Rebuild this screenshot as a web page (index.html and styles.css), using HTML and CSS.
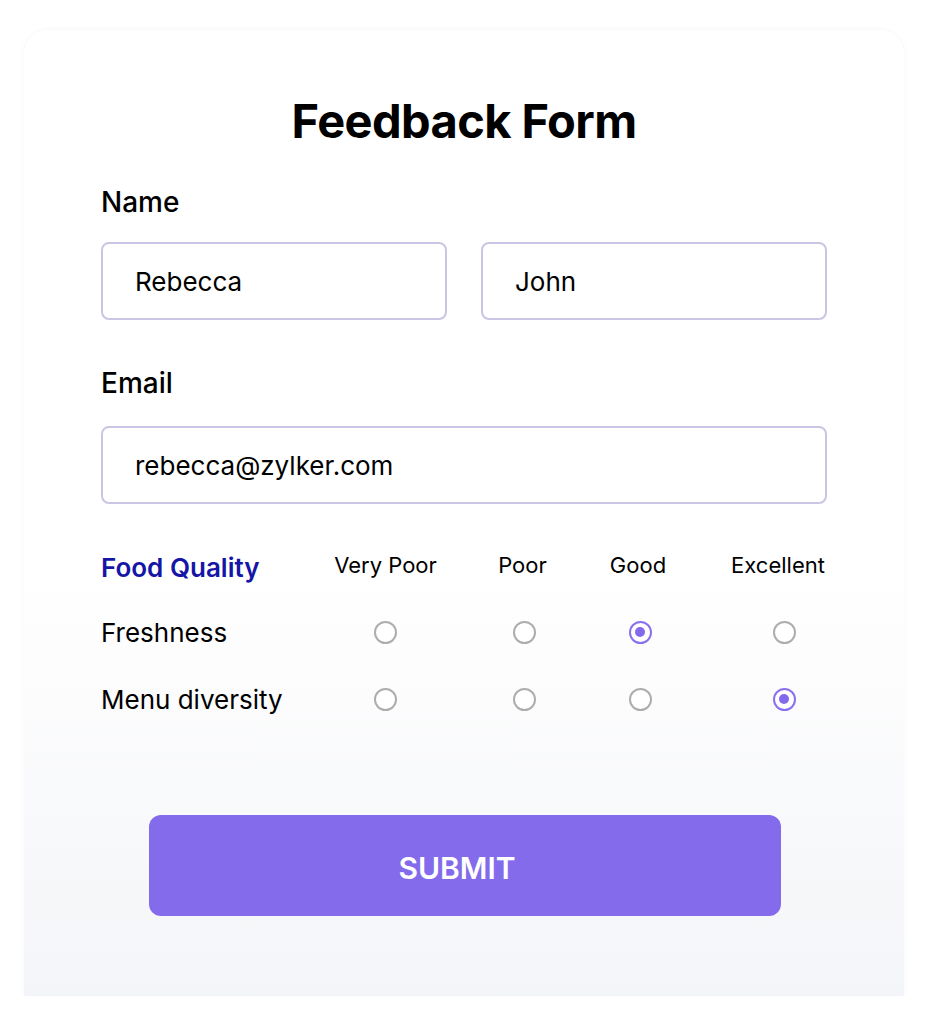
FILE: index.html
```html
<!DOCTYPE html>
<html lang="en">
<head>
    <meta charset="UTF-8">
    <meta name="viewport" content="width=device-width, initial-scale=1.0">
    <title>Feedback Form</title>
    <link rel="stylesheet" href="styles.css">
</head>
<body>
    <form class="card">
        <h1 class="title">Feedback Form</h1>

        <label class="field-label">Name</label>
        <div class="name-row">
            <input class="text-input" type="text" value="Rebecca">
            <input class="text-input" type="text" value="John">
        </div>

        <label class="field-label email-label">Email</label>
        <input class="text-input" type="text" value="rebecca@zylker.com">

        <div class="rating">
            <div class="rating-title">Food Quality</div>
            <div class="rating-head">Very Poor</div>
            <div class="rating-head">Poor</div>
            <div class="rating-head">Good</div>
            <div class="rating-head">Excellent</div>

            <div class="rating-label">Freshness</div>
            <input class="radio" type="radio" name="fresh">
            <input class="radio r2" type="radio" name="fresh">
            <input class="radio r3" type="radio" name="fresh" checked>
            <input class="radio r4" type="radio" name="fresh">

            <div class="rating-label">Menu diversity</div>
            <input class="radio" type="radio" name="menu">
            <input class="radio r2" type="radio" name="menu">
            <input class="radio r3" type="radio" name="menu">
            <input class="radio r4" type="radio" name="menu" checked>
        </div>

        <div class="actions">
            <button class="submit" type="button">SUBMIT</button>
        </div>
    </form>
</body>
</html>
```
FILE: styles.css
```css
*{
    margin: 0;
    padding: 0;
    box-sizing: border-box;
}
body{
    background: #fff;
    font-family: Inter, "Noto Sans", sans-serif;
    color: #000;
}
.card{
    width: 880px;
    margin: 30px 0 14px 24px;
    padding: 64px 77px 80px;
    border-radius: 24px 24px 0 0;
    background: linear-gradient(to bottom, #fff 0%, #fff 55%, #f4f5f8 100%);
    box-shadow: 0 -1px 4px rgba(0,0,0,0.04);
}
.title{
    font-size: 47px;
    font-weight: 700;
    line-height: 53px;
    text-align: center;
    letter-spacing: -0.6px;
    margin-bottom: 38px;
}
.field-label{
    display: block;
    font-size: 28px;
    font-weight: 500;
    line-height: 34px;
    margin-bottom: 23px;
}
.email-label{
    margin-top: 46px;
    margin-bottom: 26px;
}
.name-row{
    display: flex;
    gap: 34px;
}
.text-input{
    display: block;
    width: 100%;
    height: 78px;
    border: 2px solid #c9c6e3;
    border-radius: 8px;
    padding: 0 32px;
    font-family: inherit;
    font-size: 26px;
    color: #000;
    background: #fff;
    outline: none;
}
.rating{
    display: grid;
    grid-template-columns: minmax(0,1fr) 103px 49px 60px 98px;
    grid-auto-rows: 40px;
    column-gap: 61px;
    row-gap: 27px;
    align-items: center;
    margin-top: 41px;
}
.rating-title{
    font-size: 26px;
    font-weight: 600;
    color: #1515a6;
    white-space: nowrap;
    padding-top: 4px;
}
.rating-head{
    font-size: 22px;
    text-align: center;
    white-space: nowrap;
    justify-self: center;
}
.rating-label{
    font-size: 26px;
    white-space: nowrap;
}
.radio{
    appearance: none;
    -webkit-appearance: none;
    width: 23px;
    height: 23px;
    border: 2px solid #adadad;
    border-radius: 50%;
    justify-self: center;
    background: #fff;
    position: relative;
}
.radio.r2,
.radio.r3{
    margin-left: 4px;
}
.radio.r4{
    margin-left: 12px;
}
.radio:checked{
    border-color: #8a70f0;
}
.radio:checked::after{
    content: "";
    position: absolute;
    left: 4.5px;
    top: 4.5px;
    width: 10px;
    height: 10px;
    border-radius: 50%;
    background: #8469ec;
}
.actions{
    margin-top: 96px;
    padding: 0 48px;
}
.submit{
    display: block;
    width: 632px;
    height: 101px;
    border: none;
    border-radius: 12px;
    background: #836bec;
    color: #fff;
    font-family: inherit;
    font-size: 30px;
    font-weight: 600;
    padding-right: 16px;
    padding-top: 4px;
}
```
